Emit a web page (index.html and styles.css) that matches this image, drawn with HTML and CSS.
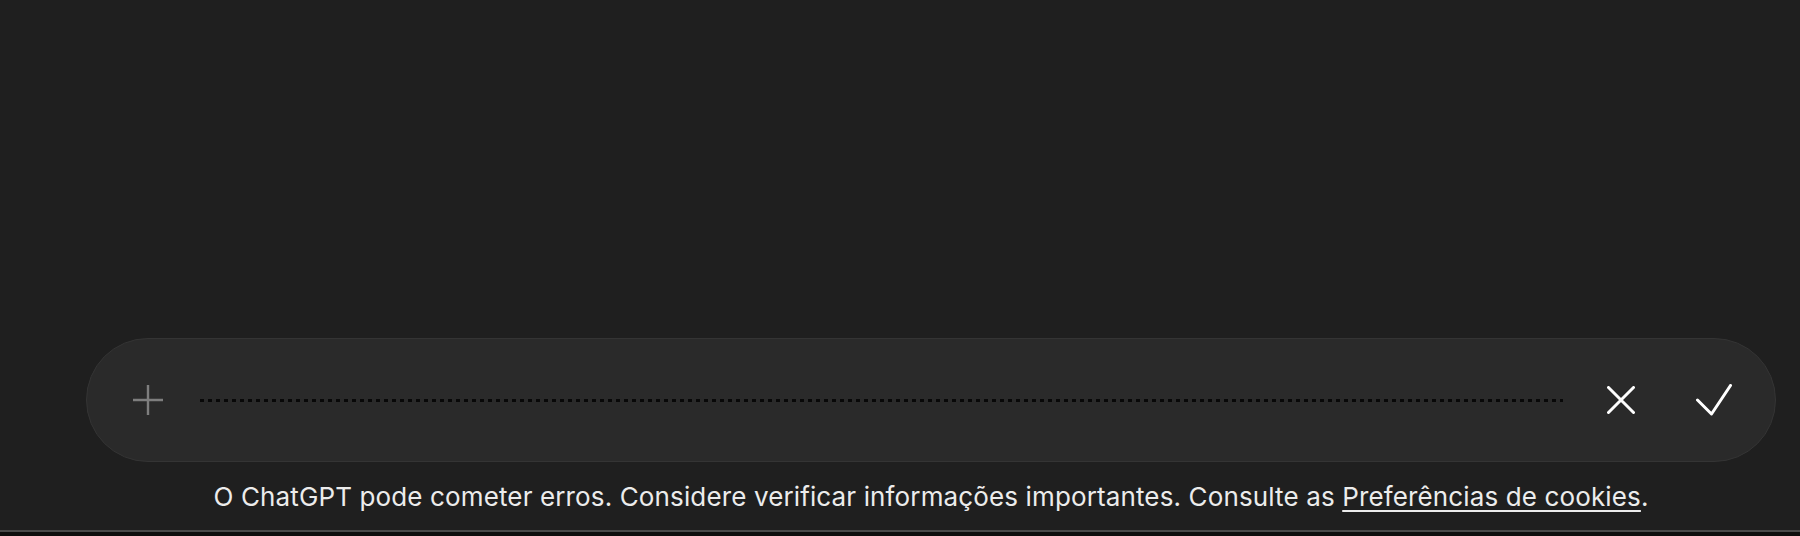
FILE: index.html
```html
<!DOCTYPE html>
<html lang="pt">
<head>
  <meta charset="UTF-8">
  <title>ChatGPT</title>
  <link rel="stylesheet" href="styles.css">
</head>
<body>

  <div class="page">
    <div class="composer">
      <button class="icon-btn btn-plus" aria-label="Adicionar">
        <svg width="32" height="32" viewBox="0 0 32 32">
          <path d="M16 1v30M1 16h30" stroke="#7e7e7e" stroke-width="2.4" fill="none"/>
        </svg>
      </button>
      <div class="wave"></div>
      <button class="icon-btn btn-cancel" aria-label="Cancelar">
        <svg width="28" height="28" viewBox="0 0 28 28">
          <path d="M1.5 1.5l25 25M26.5 1.5l-25 25" stroke="#fff" stroke-width="3" stroke-linecap="round" fill="none"/>
        </svg>
      </button>
      <button class="icon-btn btn-ok" aria-label="Confirmar">
        <svg width="36" height="32" viewBox="0 0 36 32">
          <path d="M1.5 16l14 14L34.5 1.5" stroke="#fff" stroke-width="3" stroke-linecap="round" stroke-linejoin="round" fill="none"/>
        </svg>
      </button>
    </div>

    <p class="disclaimer">O ChatGPT pode cometer erros. Considere verificar informações importantes. Consulte as <a href="#">Preferências de cookies</a>.</p>
  </div>

  <div class="bottom-edge"></div>

</body>
</html>
```

FILE: styles.css
```css
html, body {
  margin: 0;
  padding: 0;
}

body {
  background: #1f1f1f;
  font-family: Inter, "Noto Sans", sans-serif;
  color: #ececec;
  height: 536px;
  overflow: hidden;
  display: flex;
  flex-direction: column;
}

.page {
  flex: 1;
  display: flex;
  flex-direction: column;
  justify-content: flex-end;
}

.composer {
  margin-left: 86px;
  width: 1690px;
  height: 124px;
  box-sizing: border-box;
  background: #2a2a2a;
  border: 1px solid #343434;
  border-radius: 62px;
  display: flex;
  align-items: center;
  padding: 0 43px 0 45px;
}

.icon-btn {
  background: none;
  border: none;
  padding: 0;
  display: flex;
  align-items: center;
  justify-content: center;
  cursor: pointer;
}

.btn-plus {
  width: 32px;
  height: 32px;
}

.wave {
  flex: 1;
  height: 3px;
  margin: 0 44px 0 36px;
  background-image: linear-gradient(to right, #080808 0, #080808 4px, transparent 4px);
  background-size: 8px 3px;
  background-repeat: repeat-x;
}

.btn-cancel {
  width: 28px;
  height: 28px;
  margin-right: 61px;
}

.btn-ok {
  width: 36px;
  height: 32px;
}

.disclaimer {
  margin: 0;
  height: 68px;
  box-sizing: border-box;
  padding-top: 19px;
  line-height: 32px;
  font-size: 26px;
  letter-spacing: 0.13px;
  text-align: center;
  padding-left: 86px;
  padding-right: 24px;
}

.disclaimer a {
  color: #ececec;
  text-decoration: underline;
  text-underline-offset: 4px;
  text-decoration-thickness: 2px;
}

.bottom-edge {
  height: 4px;
  border-top: 2px solid #4a4a4a;
  background: #0e0e0e;
}
```
